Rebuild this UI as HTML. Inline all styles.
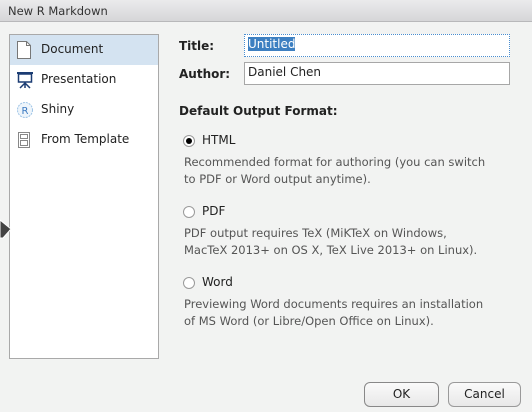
<!DOCTYPE html>
<html><head><style>
*{margin:0;padding:0;box-sizing:border-box}
body{width:532px;height:412px;background:#f2f3f2;font-family:"DejaVu Sans","Liberation Sans",sans-serif;font-size:12px;color:#222;position:relative;overflow:hidden}
.tb{position:absolute;left:0;top:0;width:532px;height:22px;background:linear-gradient(#ebebec,#d6d6d8);border-bottom:1px solid #b8b8ba;font-size:11.5px;color:#333;padding:4px 0 0 8px}
.lp{position:absolute;left:9px;top:34px;width:150px;height:325px;background:#fff;border:1px solid #a9a9a9}
.it{position:absolute;left:0;width:148px;height:30px;line-height:28px;padding-left:31px;font-size:12px}
.sel{background:#d4e3f1}
.ic{position:absolute;left:6px;top:6px}
.a{position:absolute;white-space:nowrap}
.b{font-weight:bold}
.inp{position:absolute;background:#fff;border:1px solid #a7a7a7;height:23px;padding:2px 0 0 3px;font-size:12px}
.rad{position:absolute;width:12px;height:12px;border:1px solid #9a9a9a;border-radius:50%;background:#fff}
.desc{position:absolute;left:184px;color:#555;font-size:11.5px;line-height:17px;white-space:nowrap}
.btn{position:absolute;top:382px;height:25px;border:1px solid #9a9a9a;border-radius:6px;background:linear-gradient(#fafafa,#e8e8e8);text-align:center;line-height:23px;font-size:12px}
</style></head><body>
<div class="tb">New R Markdown</div>
<div class="lp">
<div class="it sel" style="top:0">
<svg class="ic" width="16" height="18" viewBox="0 0 16 18"><path d="M1.5 .5h9l4 4v13h-13z" fill="#fff" stroke="#777"/><path d="M10.5 .5v4h4" fill="none" stroke="#777"/></svg>Document</div>
<div class="it" style="top:30px">
<svg class="ic" width="18" height="18" viewBox="0 0 18 18"><rect x="1" y="1" width="16" height="2" fill="#1b3c73"/><rect x="2.5" y="3" width="13" height="8" fill="#fff" stroke="#1b3c73" stroke-width="1.5"/><path d="M9 11v6M9 12l-5 5M9 12l5 5" stroke="#1b3c73" stroke-width="1.5"/></svg>Presentation</div>
<div class="it" style="top:60px">
<svg class="ic" width="18" height="18" viewBox="0 0 18 18"><circle cx="9" cy="9" r="7.5" fill="#eef5fb" stroke="#9cc3e6" stroke-dasharray="2 1"/><text x="5.5" y="13" font-size="10" fill="#3a78c0" font-family="DejaVu Sans">R</text></svg>Shiny</div>
<div class="it" style="top:90px">
<svg class="ic" width="16" height="18" viewBox="0 0 16 18"><rect x="2.5" y="1.5" width="11" height="15" fill="#fff" stroke="#888"/><rect x="4.5" y="3.5" width="7" height="4" fill="none" stroke="#888"/><rect x="4.5" y="9.5" width="7" height="5" fill="none" stroke="#888"/></svg>From Template</div>
</div>
<div class="a b" style="left:179px;top:39px">Title:</div>
<div class="a b" style="left:179px;top:67px">Author:</div>
<div class="inp" style="left:244px;top:34px;width:266px;border:1px dotted #4a8ed0"><span style="background:#3c7fc1;color:#fff">Untitled</span></div>
<div class="inp" style="left:244px;top:62px;width:266px">Daniel Chen</div>
<div class="a b" style="left:179px;top:104px">Default Output Format:</div>
<div class="rad" style="left:183px;top:135px"><div style="width:6px;height:6px;border-radius:50%;background:#000;margin:2px"></div></div>
<div class="a" style="left:202px;top:133px">HTML</div>
<div class="desc" style="top:154px">Recommended format for authoring (you can switch<br>to PDF or Word output anytime).</div>
<div class="rad" style="left:183px;top:206px"></div>
<div class="a" style="left:202px;top:204px">PDF</div>
<div class="desc" style="top:225px">PDF output requires TeX (MiKTeX on Windows,<br>MacTeX 2013+ on OS X, TeX Live 2013+ on Linux).</div>
<div class="rad" style="left:183px;top:277px"></div>
<div class="a" style="left:202px;top:275px">Word</div>
<div class="desc" style="top:296px">Previewing Word documents requires an installation<br>of MS Word (or Libre/Open Office on Linux).</div>
<div class="btn" style="left:364px;width:75px;border-color:#888;border-width:1.5px">OK</div>
<div class="btn" style="left:448px;width:73px">Cancel</div>
<svg style="position:absolute;left:0;top:218px" width="14" height="22"><path d="M0 2L11 11L3 20H0z" fill="#444" stroke="#fff"/></svg>
</body></html>
